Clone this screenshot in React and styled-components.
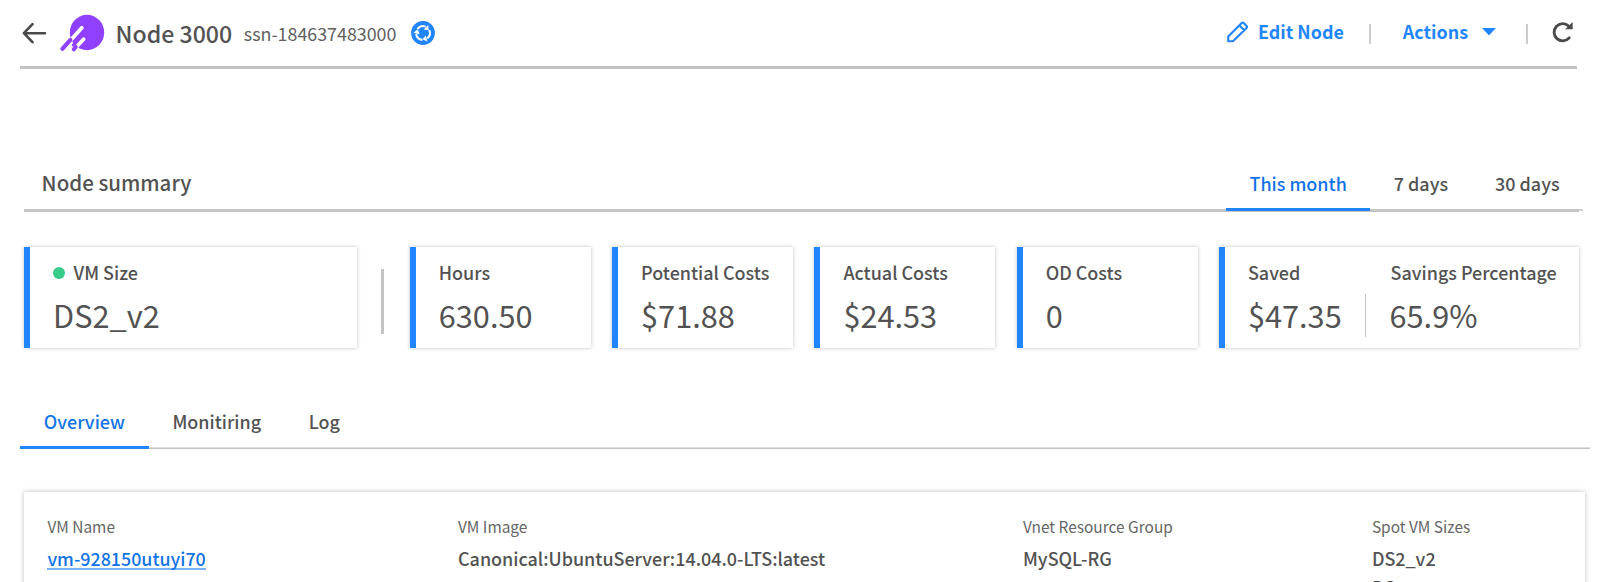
import React from 'react';
import styled, { createGlobalStyle } from 'styled-components';

const BLUE = '#2185ff';
const LINK = '#1273e6';
const INK = '#525252';
const LINE = '#c4c4c4';

const GlobalStyle = createGlobalStyle`
  *, *::before, *::after { box-sizing: border-box; }
  html, body { margin: 0; padding: 0; background: #fff; overflow: hidden; }
  body {
    font-family: "Noto Sans CJK SC", "Open Sans", sans-serif;
    color: ${INK};
  }
`;

const Page = styled.main`
  height: 582px;
  overflow: hidden;
  padding-left: 20px;
  display: flex;
  flex-direction: column;
  svg { display: block; flex: none; }
`;

/* Header */
const Header = styled.header`
  width: 1557px;
  height: 69px;
  flex: none;
  display: flex;
  justify-content: space-between;
  border-bottom: 3px solid ${LINE};
`;
const TitleGroup = styled.div`
  display: flex;
  align-items: flex-start;
  padding: 12px 0 0 2px;
`;
const BackIcon = styled.svg`
  margin: 10px 11px 0 0;
`;
const Title = styled.h1`
  margin: 5px 0 0 9.5px;
  font-size: 23.1px;
  font-weight: 500;
  line-height: 32px;
  width: 128.3px;
  white-space: nowrap;
`;
const NodeId = styled.span`
  margin-top: 7px;
  width: 167px;
  font-size: 17.85px;
  line-height: 28px;
  color: #606060;
`;
const SyncIcon = styled.svg`
  margin-top: 9px;
`;
const HeaderActions = styled.div`
  display: flex;
  align-items: flex-start;
  padding: 17px 4px 0 0;
`;
const ActionButton = styled.button`
  display: flex;
  gap: ${p => p.$gap}px;
  padding: 0;
  border: 0;
  background: none;
  color: ${BLUE};
  font: 700 17.9px/28px "Noto Sans CJK SC", sans-serif;
  white-space: nowrap;
`;
const PencilIcon = styled.svg`
  margin-top: 4px;
`;
const CaretIcon = styled.svg`
  margin-top: 11px;
`;
const ActionDivider = styled.span`
  width: 2px;
  height: 20px;
  margin: 7px ${p => p.$after}px 0 ${p => p.$before}px;
  background: #ccc;
`;
const RefreshIcon = styled.svg`
  margin-top: 4px;
`;

/* Summary */
const SummaryBar = styled.section`
  width: 1563px;
  height: 47px;
  margin: 96px 0 0 0;
  flex: none;
  display: flex;
  align-items: flex-end;
  padding-left: 4px;
`;
const SummaryTitle = styled.h2`
  flex: 1;
  height: 47px;
  margin: 0;
  padding: 1px 0 0 17.6px;
  font-size: 20.5px;
  font-weight: 500;
  line-height: 32px;
  border-bottom: 3px solid ${LINE};
`;
const PeriodTabs = styled.nav`
  display: flex;
  height: 47px;
  background: linear-gradient(${LINE}, ${LINE}) 0 44px / 353px 3px no-repeat,
    linear-gradient(#d2d2d2, #d2d2d2) 0 44px / 100% 2px no-repeat;
`;
const Tab = styled.a`
  height: ${p => p.$height}px;
  padding: ${p => p.$top}px ${p => p.$pad}px 0;
  font-size: 17.95px;
  font-weight: 500;
  line-height: 26px;
  white-space: nowrap;
  color: ${p => (p.$active ? LINK : INK)};
  border-bottom: 3px solid ${p => (p.$active ? BLUE : 'transparent')};
`;

const Metrics = styled.section`
  display: flex;
  align-items: center;
  flex: none;
  height: 101px;
  margin: 35px 0 0 4px;
`;
const Card = styled.article`
  width: ${p => p.$width}px;
  height: 101px;
  margin-right: ${p => p.$after || 0}px;
  padding: 12px 0 0 23.1px;
  border-left: 6px solid ${BLUE};
  background: #fff;
  box-shadow: 0 0 4px rgba(0, 0, 0, 0.24);
  display: flex;
`;
const Metric = styled.div`
  display: flex;
  flex-direction: column;
`;
const MetricLabel = styled.span`
  display: flex;
  align-items: center;
  font-size: 17.95px;
  font-weight: 500;
  line-height: 26px;
  margin-left: ${p => p.$shift || 0}px;
  white-space: nowrap;
`;
const StatusDot = styled.i`
  width: 12px;
  height: 12px;
  margin: 1px 8.4px 0 0;
  border-radius: 50%;
  background: #36cb8b;
`;
const MetricValue = styled.span`
  margin-top: 10px;
  font-size: 30.7px;
  font-weight: 400;
  line-height: 40px;
  white-space: nowrap;
`;
const GroupDivider = styled.span`
  width: 3px;
  height: 65px;
  margin: 8px 25.7px 0 24px;
  background: ${LINE};
`;
const CardDivider = styled.span`
  width: 1.5px;
  height: 43px;
  margin: 35px 23.2px 0 23.2px;
  background: ${LINE};
`;

/* Detail */
const DetailTabs = styled.nav`
  width: 1570px;
  height: 54px;
  margin-top: 47px;
  flex: none;
  display: flex;
  background: linear-gradient(#c2c2c2, #c2c2c2) 0 53px / 100% 1px no-repeat,
    linear-gradient(#dedede, #dedede) 0 52px / 100% 1px no-repeat;
`;
const Panel = styled.section`
  width: 1561px;
  height: 200px;
  margin: 43px 0 0 4px;
  flex: none;
  padding: 22px 0 0 23.4px;
  display: grid;
  grid-template-columns: 410.6px 565px 348.9px 1fr;
  box-shadow: 0 0 5px rgba(0, 0, 0, 0.26);
`;
const Field = styled.div`
  display: flex;
  flex-direction: column;
  align-items: flex-start;
`;
const FieldLabel = styled.span`
  font-size: 15.45px;
  line-height: 24px;
  color: #666;
`;
const FieldValue = styled.span`
  margin-top: ${p => p.$gap}px;
  font-size: 17.95px;
  font-weight: 500;
  line-height: 26px;
  white-space: nowrap;
`;
const FieldLink = styled.a`
  margin-top: 7px;
  font-size: 17.85px;
  font-weight: 500;
  line-height: 26px;
  height: 25px;
  color: ${LINK};
  border-bottom: 2px solid #79b3f7;
`;

const PURPLE = '#9040ff';
const NodeLogo = () => (
  <svg width="48" height="42" viewBox="0 0 48 42" fill="none" strokeLinecap="round">
    <ellipse cx="29" cy="20.5" rx="17.2" ry="17.7" fill={PURPLE} />
    <path d="M23.8 15.8 11.6 29.6M25.6 27.2 17 36.5" stroke="#fff" strokeWidth="3.7" />
    <path d="M12.4 27.9 4.4 36.8M17.6 34.8 15.8 37.4" stroke={PURPLE} strokeWidth="4.1" />
    <path d="M17 30.8 15 33.2" stroke={PURPLE} strokeWidth="2.6" />
  </svg>
);

const Sync = () => (
  <SyncIcon width="24" height="24" viewBox="0 0 24 24">
    <circle cx="12" cy="12" r="11.9" fill={BLUE} />
    {[0, 120, 240].map(turn => (
      <g key={turn} transform={`rotate(${turn} 12 12)`}>
        <path d="M6.4 8A6.9 6.9 0 0 1 14.6 5.6" fill="none" stroke="#fff" strokeWidth="2.1" />
        <path d="M17.1 3.9 17.8 9.3 12.7 8.4z" fill="#fff" />
      </g>
    ))}
  </SyncIcon>
);

const periods = ['This month', '7 days', '30 days'];
const sections = ['Overview', 'Monitiring', 'Log'];
const metrics = [
  ['Hours', '630.50'],
  ['Potential Costs', '$71.88'],
  ['Actual Costs', '$24.53'],
  ['OD Costs', '0'],
];

export default function App() {
  return (
    <>
      <GlobalStyle />
      <Page>
        <Header>
          <TitleGroup>
            <BackIcon width="25" height="22" viewBox="0 0 25 22" fill="none" stroke="#4a4a4a" strokeWidth="2.6" strokeLinecap="round" strokeLinejoin="round">
              <path d="M23 11.2H2M10.5 2.2 1.9 11.2l8.6 9" />
            </BackIcon>
            <NodeLogo />
            <Title>Node 3000</Title>
            <NodeId>ssn-184637483000</NodeId>
            <Sync />
          </TitleGroup>
          <HeaderActions>
            <ActionButton $gap={8.8}>
              <PencilIcon width="22" height="22" viewBox="0 0 22 22" fill="none" stroke={BLUE} strokeWidth="2.1" strokeLinejoin="round">
                <path d="M1.2 20.2v-4.7L14.7 2q1-.9 2 0l2.9 2.9q.9 1 0 2L6 20.2zM12.4 4.4l4.8 4.8" />
              </PencilIcon>
              Edit Node
            </ActionButton>
            <ActionDivider $before={25} $after={32} />
            <ActionButton $gap={14}>
              Actions
              <CaretIcon width="14" height="8" viewBox="0 0 14 8">
                <path d="M0 0h14L7 7.6z" fill={BLUE} />
              </CaretIcon>
            </ActionButton>
            <ActionDivider $before={30} $after={24} />
            <RefreshIcon width="21" height="22" viewBox="0 0 21 22" fill="none">
              <path d="M17.2 16.9A8.6 8.6 0 1 1 16.6 5" stroke="#4a4a4a" strokeWidth="2.9" strokeLinecap="round" />
              <path d="M20.6 1v7.2h-7.4z" fill="#4a4a4a" />
            </RefreshIcon>
          </HeaderActions>
        </Header>

        <SummaryBar>
          <SummaryTitle>Node summary</SummaryTitle>
          <PeriodTabs>
            {periods.map((name, i) => (
              <Tab key={name} $active={i === 0} $height={46} $top={5} $pad={23.5}>{name}</Tab>
            ))}
          </PeriodTabs>
        </SummaryBar>

        <Metrics>
          <Card $width={333}>
            <Metric>
              <MetricLabel><StatusDot />VM Size</MetricLabel>
              <MetricValue>DS2_v2</MetricValue>
            </Metric>
          </Card>
          <GroupDivider />
          {metrics.map(([label, value]) => (
            <Card key={label} $width={181} $after={21.3}>
              <Metric>
                <MetricLabel>{label}</MetricLabel>
                <MetricValue>{value}</MetricValue>
              </Metric>
            </Card>
          ))}
          <Card $width={360}>
            <Metric>
              <MetricLabel>Saved</MetricLabel>
              <MetricValue>$47.35</MetricValue>
            </Metric>
            <CardDivider />
            <Metric>
              <MetricLabel $shift={1}>Savings Percentage</MetricLabel>
              <MetricValue>65.9%</MetricValue>
            </Metric>
          </Card>
        </Metrics>

        <DetailTabs>
          {sections.map((name, i) => (
            <Tab key={name} $active={i === 0} $height={54} $top={13} $pad={23.8}>{name}</Tab>
          ))}
        </DetailTabs>

        <Panel>
          <Field>
            <FieldLabel>VM Name</FieldLabel>
            <FieldLink>vm-928150utuyi70</FieldLink>
          </Field>
          <Field>
            <FieldLabel>VM Image</FieldLabel>
            <FieldValue $gap={7}>Canonical:UbuntuServer:14.04.0-LTS:latest</FieldValue>
          </Field>
          <Field>
            <FieldLabel>Vnet Resource Group</FieldLabel>
            <FieldValue $gap={7}>MySQL-RG</FieldValue>
          </Field>
          <Field>
            <FieldLabel>Spot VM Sizes</FieldLabel>
            <FieldValue $gap={7}>DS2_v2</FieldValue>
            <FieldValue $gap={3}>DS1_v1</FieldValue>
          </Field>
        </Panel>
      </Page>
    </>
  );
}
